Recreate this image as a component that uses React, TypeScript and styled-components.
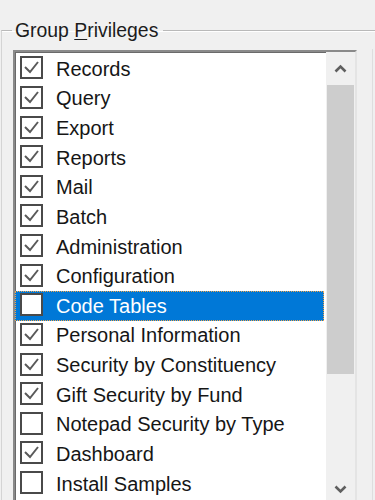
import React from "react";
import styled, { createGlobalStyle } from "styled-components";

const Global = createGlobalStyle`
  html, body { margin: 0; padding: 0; background: #f0f0f0; }
  body { width: 375px; height: 500px; overflow: hidden; font-family: "Liberation Sans", Arial, sans-serif; }
  #root { width: 375px; height: 500px; overflow: hidden; }
`;

const GroupBox = styled.fieldset`
  box-sizing: border-box;
  margin: 19px 0 0 1px;
  padding: 0;
  width: 420px;
  min-width: 0;
  border: none;
  border-top: 1px solid #b9b9b9;
  border-left: 1px solid #d4d4d4;
  box-shadow: inset 0 1px 0 #ffffff;
  height: 520px;
`;

const Legend = styled.legend`
  margin-left: 10px;
  padding: 0 5px 0 3px;
  font-size: 19.4px;
  line-height: 22px;
  color: #1c1c1c;
  u { text-decoration-thickness: 1px; text-underline-offset: 2px; }
`;

const Body = styled.div`
  display: flex;
  align-items: flex-start;
  padding: 9px 0 0 11px;
`;

const ListBox = styled.div`
  box-sizing: border-box;
  display: flex;
  width: 344px;
  height: 456px;
  background: #ffffff;
  border-top: 2px solid #8a8a8a;
  border-left: 2px solid #8a8a8a;
  border-right: 2px solid #e4e4e4;
  box-shadow: inset 1px 1px 0 #6a6a6a;
`;

const Items = styled.ul`
  list-style: none;
  margin: 0;
  padding: 2px 0 0;
  width: 311px;
  flex: none;
`;

const Row = styled.li<{ $selected?: boolean }>`
  box-sizing: border-box;
  display: flex;
  align-items: center;
  gap: 13px;
  height: 29.64px;
  padding-left: 5px;
  margin-right: 2px;
  font-size: 20px;
  color: ${(p) => (p.$selected ? "#ffffff" : "#161616")};
  background: ${(p) => (p.$selected ? "#0078d7" : "transparent")};
  outline: ${(p) => (p.$selected ? "1px dotted #f2a54a" : "none")};
  outline-offset: -1px;
  white-space: nowrap;
`;

const Label = styled.span`
  padding-top: 1px;
`;

const Box = styled.span`
  box-sizing: border-box;
  flex: none;
  width: 23px;
  height: 23px;
  margin-top: -2px;
  border: 2px solid #4a4a4a;
  background: #ffffff;
  display: flex;
  align-items: center;
  justify-content: center;
  svg { display: block; }
`;

const ScrollBar = styled.div`
  width: 29px;
  flex: none;
  display: flex;
  flex-direction: column;
  background: #f0f0f0;
`;

const ArrowButton = styled.div`
  height: 33px;
  flex: none;
  display: flex;
  align-items: center;
  justify-content: center;
`;

const Thumb = styled.div`
  height: 289px;
  margin: 0 1px;
  background: #cdcdcd;
  flex: none;
`;

const Track = styled.div`
  flex: 1;
`;

const SideStrip = styled.div`
  width: 16px;
  flex: none;
  height: 460px;
  margin: -1px 0 0 15px;
  border-left: 1px solid #dedede;
`;

const items: [string, boolean][] = [
  ["Records", true],
  ["Query", true],
  ["Export", true],
  ["Reports", true],
  ["Mail", true],
  ["Batch", true],
  ["Administration", true],
  ["Configuration", true],
  ["Code Tables", false],
  ["Personal Information", true],
  ["Security by Constituency", true],
  ["Gift Security by Fund", true],
  ["Notepad Security by Type", false],
  ["Dashboard", true],
  ["Install Samples", false],
];

const Check = () => (
  <svg width="19" height="19" viewBox="0 0 19 19">
    <polyline points="3,9 8,14 16,4" fill="none" stroke="#5a5a5a" strokeWidth="2" />
  </svg>
);

const Chevron = ({ up }: { up?: boolean }) => (
  <svg width="13" height="9" viewBox="0 0 13 9">
    <polyline
      points={up ? "1.5,7.5 6.5,2.5 11.5,7.5" : "1.5,1.5 6.5,6.5 11.5,1.5"}
      fill="none"
      stroke="#5f5f5f"
      strokeWidth="2.6"
    />
  </svg>
);

export default function App() {
  return (
    <>
      <Global />
      <GroupBox>
        <Legend>
          Group <u>P</u>rivileges
        </Legend>
        <Body>
          <ListBox>
            <Items>
              {items.map(([label, checked], i) => (
                <Row key={label} $selected={i === 8}>
                  <Box>{checked ? <Check /> : null}</Box>
                  <Label>{label}</Label>
                </Row>
              ))}
            </Items>
            <ScrollBar>
              <ArrowButton>
                <Chevron up />
              </ArrowButton>
              <Thumb />
              <Track />
              <ArrowButton>
                <Chevron />
              </ArrowButton>
            </ScrollBar>
          </ListBox>
          <SideStrip />
        </Body>
      </GroupBox>
    </>
  );
}
